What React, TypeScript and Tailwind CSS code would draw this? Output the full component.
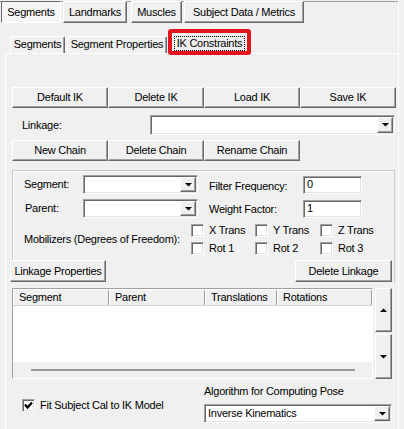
import clsx from "clsx";
import React from "react";

// classic 3d bevels
const raised =
  "bg-[#f0f0f0] border border-t-white border-l-white border-r-[#696969] border-b-[#696969] shadow-[inset_-1px_-1px_0_#a0a0a0]";
const sunken =
  "bg-white border border-t-[#a0a0a0] border-l-[#a0a0a0] border-r-white border-b-white shadow-[inset_1px_1px_0_#696969,inset_-1px_-1px_0_#e3e3e3]";

const Btn: React.FC<{ children?: React.ReactNode; className?: string }> = ({
  children,
  className,
}) => (
  <div
    className={clsx(
      raised,
      "flex items-center justify-center whitespace-nowrap",
      className
    )}
  >
    {children}
  </div>
);

const Arrow = ({ up }: { up?: boolean }) => (
  <svg width="7" height="4" viewBox="0 0 7 4">
    <polygon
      points={up ? "0,4 7,4 3.5,0.5" : "0,0 7,0 3.5,3.5"}
      fill="#000"
    />
  </svg>
);

const Combo: React.FC<{ className?: string; value?: string }> = ({
  className,
  value,
}) => (
  <div className={clsx(sunken, "flex items-stretch p-px", className)}>
    <div className="flex-1 pl-[2px] flex items-center whitespace-nowrap">
      {value}
    </div>
    <div
      className={clsx(raised, "w-[16px] flex items-center justify-center")}
    >
      <Arrow />
    </div>
  </div>
);

const Input: React.FC<{ value: string; className?: string }> = ({
  value,
  className,
}) => (
  <div className={clsx(sunken, "flex items-center pl-[3px]", className)}>
    {value}
  </div>
);

const Check: React.FC<{ checked?: boolean; className?: string }> = ({
  checked,
  className,
}) => (
  <div
    className={clsx(
      sunken,
      "w-[13px] h-[13px] shrink-0 flex items-center justify-center",
      className
    )}
  >
    {checked && (
      <svg width="9" height="9" viewBox="0 0 9 9">
        <path d="M1 3.5 L3.5 6.5 L8 1.5" stroke="#000" strokeWidth="2.2" fill="none" />
      </svg>
    )}
  </div>
);

const CheckItem: React.FC<{ label: string; className?: string }> = ({
  label,
  className,
}) => (
  <div className={clsx("flex items-center h-[13px]", className)}>
    <Check />
    <span className="ml-[5px] whitespace-nowrap">{label}</span>
  </div>
);

const HeaderCell: React.FC<{ label: string; className?: string }> = ({
  label,
  className,
}) => (
  <div
    className={clsx(
      "h-full flex items-center pl-[6px] border-r border-[#a0a0a0] shadow-[inset_1px_0_0_white] whitespace-nowrap",
      className
    )}
  >
    {label}
  </div>
);

export default function App() {
  return (
    <div className="w-[404px] h-[429px] overflow-hidden bg-[#f0f0f0] pt-px text-[11px] leading-[13px] tracking-[-0.25px] text-black font-['Liberation_Sans',Arial,sans-serif] relative">
      <div className="w-[399px] h-[428px] border-r border-white flex flex-col">
        {/* main tabs */}
        <div className="border-t border-[#a0a0a0] h-[22px] flex items-start">
          <div className="-mt-px ml-px w-[60px] h-[22px] flex items-center justify-center border border-t-[#696969] border-l-[#696969] border-r-white border-b-white bg-[repeating-conic-gradient(#ffffff_0%_25%,#ececec_0%_50%)] bg-[length:2px_2px]">
            Segments
          </div>
          <Btn className="-mt-px ml-[2px] w-[64px] h-[22px]">Landmarks</Btn>
          <Btn className="-mt-px ml-[4px] w-[51px] h-[22px]">Muscles</Btn>
          <Btn className="-mt-px ml-[2px] w-[120px] h-[22px]">
            Subject Data / Metrics
          </Btn>
        </div>

        {/* sub tabs */}
        <div className="h-[30px] flex items-end pl-[10px]">
          <div className="w-[55px] h-[17px] pt-px flex justify-center border-t border-l border-white border-r border-r-[#696969] shadow-[inset_-1px_0_0_#a0a0a0] rounded-t-[2px]">
            Segments
          </div>
          <div className="ml-[2px] w-[100px] h-[17px] pt-px flex justify-center border-t border-l border-white border-r border-r-[#696969] shadow-[inset_-1px_0_0_#a0a0a0] rounded-t-[2px] whitespace-nowrap">
            Segment Properties
          </div>
          <div className="relative z-10 -mb-px ml-[3px] w-[79px] h-[23px] pt-[4px] flex justify-center items-start bg-[#f0f0f0] border-t border-l border-white border-r border-r-[#696969] shadow-[inset_-1px_0_0_#a0a0a0] rounded-t-[2px]">
            <span className="border border-dotted border-black px-[2px] whitespace-nowrap">
              IK Constraints
            </span>
          </div>
        </div>

        {/* tab page */}
        <div className="flex-1 ml-[5px] border-t border-l border-white pl-[6px] pt-[33px]">
          <div className="flex">
            <Btn className="w-[96px] h-[21px]">Default IK</Btn>
            <Btn className="w-[96px] h-[21px]">Delete IK</Btn>
            <Btn className="w-[96px] h-[21px]">Load IK</Btn>
            <Btn className="w-[96px] h-[21px]">Save IK</Btn>
          </div>

          <div className="mt-[7px] flex items-center h-[20px]">
            <span className="ml-[10px] w-[128px]">Linkage:</span>
            <Combo className="w-[245px] h-[20px]" />
          </div>

          <div className="mt-[5px] flex">
            <Btn className="w-[96px] h-[21px]">New Chain</Btn>
            <Btn className="w-[96px] h-[21px]">Delete Chain</Btn>
            <Btn className="w-[96px] h-[21px]">Rename Chain</Btn>
          </div>

          {/* linkage group */}
          <div className="mt-[9px] w-[383px] border-t border-l border-r border-[#c9c9c9] shadow-[inset_1px_1px_0_white] pt-[4px]">
            <div className="flex items-center h-[19px]">
              <span className="ml-[11px] w-[59px]">Segment:</span>
              <Combo className="w-[115px] h-[19px]" />
              <span className="ml-[11px] w-[94px] pt-[3px]">
                Filter Frequency:
              </span>
              <Input value="0" className="w-[59px] h-[18px]" />
            </div>
            <div className="mt-[5px] flex items-center h-[19px]">
              <span className="ml-[12px] w-[58px]">Parent:</span>
              <Combo className="w-[115px] h-[19px]" />
              <span className="ml-[11px] w-[94px] pt-[2px]">Weight Factor:</span>
              <Input value="1" className="w-[59px] h-[18px]" />
            </div>

            <div className="mt-[6px] flex items-center">
              <span className="ml-[11px] w-[167px] whitespace-nowrap">
                Mobilizers (Degrees of Freedom):
              </span>
              <div className="grid grid-cols-[64px_65px_auto] gap-y-[5px]">
                <CheckItem label="X Trans" />
                <CheckItem label="Y Trans" />
                <CheckItem label="Z Trans" />
                <CheckItem label="Rot 1" />
                <CheckItem label="Rot 2" />
                <CheckItem label="Rot 3" />
              </div>
            </div>

            <div className="mt-[5px] flex justify-between">
              <Btn className="-ml-[3px] w-[96px] h-[22px]">Linkage Properties</Btn>
              <Btn className="mr-[2px] w-[97px] h-[22px]">Delete Linkage</Btn>
            </div>
          </div>

          {/* linkage list */}
          <div className="mt-[6px] flex">
            <div className="w-[361px] h-[91px] flex flex-col border border-t-[#a0a0a0] border-l-[#a0a0a0] border-r-white border-b-white bg-white">
              <div className="h-[17px] flex bg-[#f0f0f0] border-t border-white border-b border-b-[#d5d5d5]">
                <HeaderCell label="Segment" className="w-[96px]" />
                <HeaderCell label="Parent" className="w-[96px]" />
                <HeaderCell label="Translations" className="w-[72px]" />
                <HeaderCell label="Rotations" className="flex-1" />
              </div>
              <div className="flex-1 bg-white" />
              <div className="h-[16px] bg-[#f0f0f0] flex items-center">
                <div className="ml-[18px] w-[324px] h-[2px] bg-[#9a9a9a]" />
              </div>
            </div>
            <div className="ml-[2px] w-[17px] flex flex-col gap-[2px]">
              <Btn className="h-[44px]">
                <Arrow up />
              </Btn>
              <Btn className="h-[45px]">
                <Arrow />
              </Btn>
            </div>
          </div>

          {/* bottom options */}
          <div className="mt-[6px] flex pl-[10px]">
            <div className="w-[182px] pt-[14px] flex items-start">
              <Check checked />
              <span className="ml-[5px] whitespace-nowrap">
                Fit Subject Cal to IK Model
              </span>
            </div>
            <div className="flex flex-col">
              <span className="whitespace-nowrap">
                Algorithm for Computing Pose
              </span>
              <Combo
                value="Inverse Kinematics"
                className="mt-[6px] w-[188px] h-[19px]"
              />
            </div>
          </div>
        </div>
      </div>

      {/* red highlight around the active tab */}
      <div className="absolute left-[168px] top-[29px] w-[83px] h-[26px] border-4 border-[#e3141e] rounded-[3px] z-20" />
    </div>
  );
}
